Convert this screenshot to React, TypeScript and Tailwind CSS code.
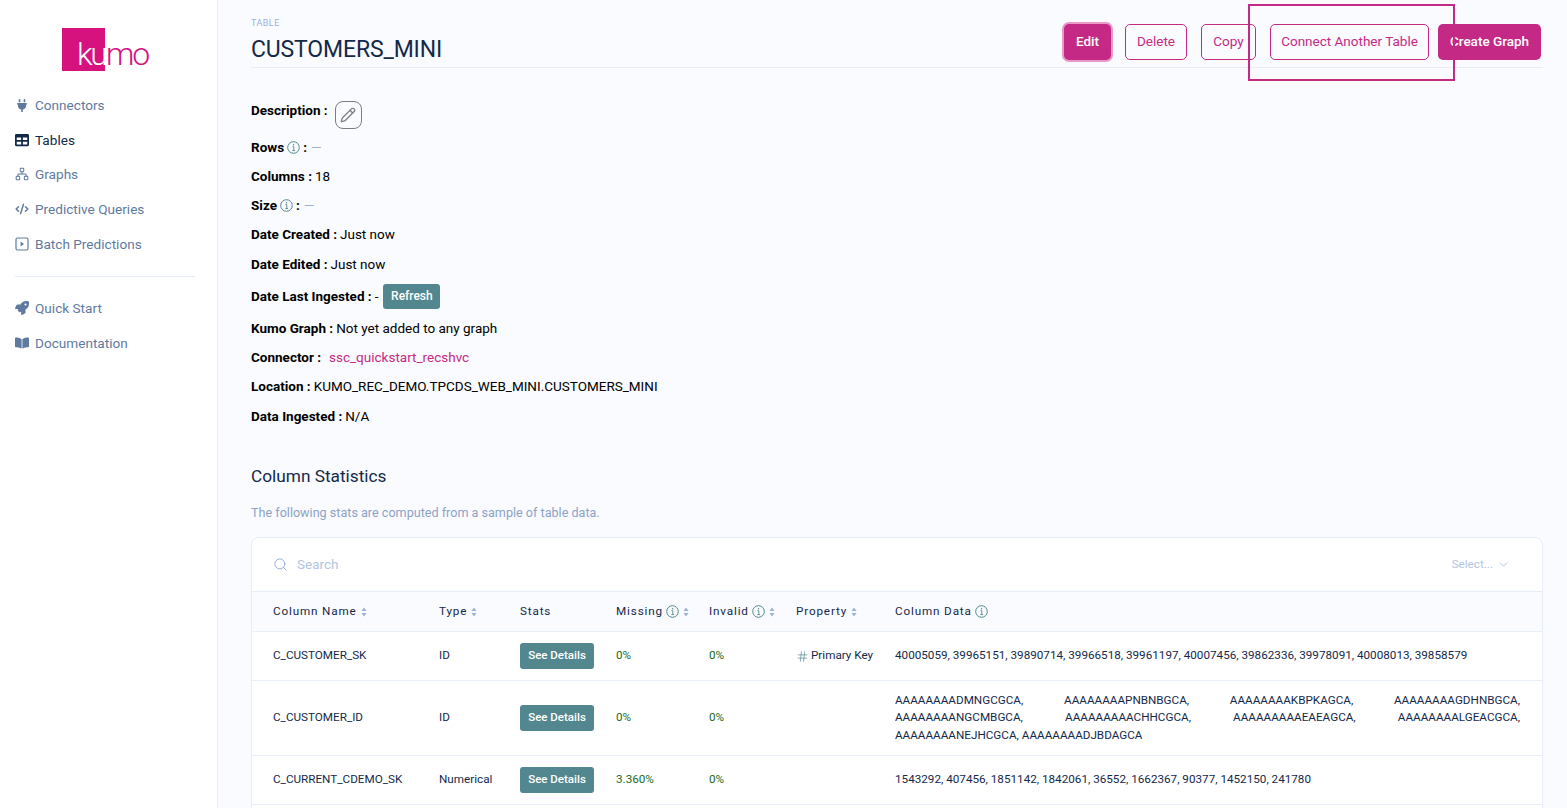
import React from "react";
import { Pencil, Search, ChevronDown, Hash, Network, CodeXml } from "lucide-react";
import { FaPlug, FaTable, FaRocket, FaBookOpen } from "react-icons/fa";

const nav = "flex items-center h-5 text-[13.6px] text-[#5f7a9f]";

function Sort() {
  return (
    <svg width="6" height="10" viewBox="0 0 6 10" className="ml-[4px] shrink-0">
      <path d="M3 0.5L5.6 4H0.4Z M3 9.5L0.4 6H5.6Z" fill="#9db3d6" />
    </svg>
  );
}

function I({ className }: { className: string }) {
  return (
    <svg viewBox="0 0 13 13" fill="none" className={className}>
      <circle cx="6.5" cy="6.5" r="5.8" stroke="#528790" strokeWidth="1" />
      <path d="M5.4 5.6H6.8V9.6M5.3 9.6H8.1" stroke="#528790" strokeWidth="0.9" />
      <circle cx="6.6" cy="3.7" r="0.7" fill="#528790" />
    </svg>
  );
}

function PlayBox({ className }: { className: string }) {
  return (
    <svg viewBox="0 0 14 14" fill="none" className={className}>
      <rect x="1" y="1" width="12" height="12" rx="1.5" stroke="currentColor" strokeWidth="1.2" />
      <path d="M5.6 4.6L9 7L5.6 9.4Z" fill="currentColor" />
    </svg>
  );
}

function Label({ children }: { children: React.ReactNode }) {
  return <span className="font-bold">{children}</span>;
}

const rowGrid = "grid grid-cols-[166px_81px_96px_93px_87px_99px_1fr] pl-[21px] pr-[22px] items-center border-b border-[#eaf0f8] text-[11.7px] text-[#14294a]";

function See() {
  return (
    <button className="block w-[74px] h-[26px] rounded-[3px] bg-[#528790] text-white text-[11.5px] font-medium text-center">See Details</button>
  );
}

export default function App() {
  return (
    <div className="h-screen w-full overflow-hidden flex bg-[#fafbfe] font-['Roboto',sans-serif] relative">
      <aside className="w-[218px] shrink-0 bg-white border-r border-[#e6edf7] h-full">
        <div className="mt-[28px] ml-[62px] flex items-start h-[43px]">
          <div className="w-[43px] h-[43px] bg-[#d6127f] relative shrink-0">
            <span className="absolute left-[15px] top-[6px] text-white text-[32px] leading-[40px] font-light tracking-[-2.5px]">ku</span>
          </div>
          <span className="text-[#d6127f] text-[32px] leading-[40px] font-light tracking-[-2.2px] ml-[1px] mt-[6px]">mo</span>
        </div>
        <nav className="mt-[24px] ml-[15px] w-[180px]">
          <div className={nav}><FaPlug className="w-[14px] h-[13px] mr-[6px] text-[#5f7a9f]" />Connectors</div>
          <div className="flex items-center h-5 text-[13.6px] text-[#14294a] mt-[15px]"><FaTable className="w-[14px] h-[14px] mr-[6px]" />Tables</div>
          <div className={`${nav} mt-[14px]`}><Network strokeWidth={1.75} className="w-[14px] h-[14px] mr-[6px]" />Graphs</div>
          <div className={`${nav} mt-[15px]`}><CodeXml strokeWidth={2.5} className="w-[14px] h-[14px] mr-[6px]" />Predictive Queries</div>
          <div className={`${nav} mt-[15px]`}><PlayBox className="w-[14px] h-[14px] mr-[6px]" />Batch Predictions</div>
          <div className="h-px bg-[#e6edf7] mt-[22px]" />
          <div className={`${nav} mt-[21px]`}><FaRocket className="w-[14px] h-[14px] mr-[6px]" />Quick Start</div>
          <div className={`${nav} mt-[15px]`}><FaBookOpen className="w-[14px] h-[14px] mr-[6px]" />Documentation</div>
        </nav>
      </aside>

      <main className="flex-1 min-w-0 pl-[33px] pr-[24px]">
        <header className="h-[68px] border-b border-[#e8ecf6] flex justify-between pr-[2px]">
          <div>
            <div className="mt-[17px] text-[9px] leading-[12px] tracking-[0.45px] text-[#9db3d6]">TABLE</div>
            <h1 className="mt-[5px] text-[23px] leading-[32px] font-normal text-[#14294a] tracking-[-0.15px]">CUSTOMERS_MINI</h1>
          </div>
          <div className="flex items-start pt-[24px] text-[13.5px]">
            <button className="h-[36px] w-[47px] pb-[1px] rounded-[5px] bg-[#c42a85] text-white font-medium ring-2 ring-[#e79ac8]">Edit</button>
            <button className="h-[36px] w-[62px] pb-[2px] ml-[14px] rounded-[5px] border border-[#c42a85] text-[#c42a85]">Delete</button>
            <button className="h-[36px] w-[55px] pb-[2px] ml-[14px] rounded-[5px] border border-[#c42a85] text-[#c42a85]">Copy</button>
            <button className="h-[36px] w-[159px] pb-[2px] ml-[14px] rounded-[5px] border border-[#c42a85] text-[#c42a85]">Connect Another Table</button>
            <button className="h-[36px] w-[103px] pb-[1px] ml-[9px] rounded-[5px] bg-[#c42a85] text-white font-medium">Create Graph</button>
          </div>
        </header>

        <section className="text-[13.5px] leading-[20px] text-[#000]">
          <div className="flex items-center h-5 mt-[32px]"><Label>Description :</Label>
            <button className="ml-[7px] mt-[10px] w-[27px] h-[28px] rounded-[8px] border border-[#7d7d7d] flex items-center justify-center"><Pencil strokeWidth={2} className="w-[16px] h-[16px] text-[#808080]" /></button>
          </div>
          <div className="flex items-center h-5 mt-[17px]"><Label>Rows</Label><I className="w-[13px] h-[13px] mx-[3px]" /><Label>:</Label><span className="ml-[4px] text-[#9db3d6]">—</span></div>
          <div className="flex items-center h-5 mt-[9px]"><Label>Columns :</Label><span className="ml-[3px]">18</span></div>
          <div className="flex items-center h-5 mt-[9px]"><Label>Size</Label><I className="w-[13px] h-[13px] mx-[3px]" /><Label>:</Label><span className="ml-[4px] text-[#9db3d6]">—</span></div>
          <div className="flex items-center h-5 mt-[9px]"><Label>Date Created :</Label><span className="ml-[3px]">Just now</span></div>
          <div className="flex items-center h-5 mt-[10px]"><Label>Date Edited :</Label><span className="ml-[3px]">Just now</span></div>
          <div className="flex items-center h-5 mt-[12px]"><Label>Date Last Ingested :</Label><span className="ml-[3px]">-</span>
            <button className="ml-[5px] w-[57px] h-[25px] rounded-[3px] bg-[#528790] text-white text-[12px] font-medium">Refresh</button>
          </div>
          <div className="flex items-center h-5 mt-[12px]"><Label>Kumo Graph :</Label><span className="ml-[3px]">Not yet added to any graph</span></div>
          <div className="flex items-center h-5 mt-[9px]"><Label>Connector :</Label><span className="ml-[8px] text-[#c42a85]">ssc_quickstart_recshvc</span></div>
          <div className="flex items-center h-5 mt-[9px]"><Label>Location :</Label><span className="ml-[3px]">KUMO_REC_DEMO.TPCDS_WEB_MINI.CUSTOMERS_MINI</span></div>
          <div className="flex items-center h-5 mt-[10px]"><Label>Data Ingested :</Label><span className="ml-[3px]">N/A</span></div>
        </section>

        <h2 className="mt-[38px] text-[17.25px] leading-[24px] font-normal text-[#14294a]">Column Statistics</h2>
        <p className="mt-[17px] text-[12.6px] leading-[16px] text-[#8ca3c7]">The following stats are computed from a sample of table data.</p>

        <div className="mt-[16px] bg-white border border-[#e6edf7] rounded-t-[8px] overflow-hidden">
          <div className="h-[54px] flex items-center pl-[21px] pr-[32px] border-b border-[#e6edf7]">
            <Search strokeWidth={1.25} className="w-[15px] h-[15px] text-[#7f9cc6]" />
            <span className="ml-[9px] text-[13.5px] text-[#b4c5e0]">Search</span>
            <span className="ml-auto text-[11.7px] text-[#b4c5e0]">Select...</span>
            <ChevronDown strokeWidth={1.5} className="ml-[4px] w-[13px] h-[13px] text-[#9db3d6]" />
          </div>
          <div className={`${rowGrid} h-[40px] pt-[1px] bg-[#fafbfe] tracking-[0.85px] text-[#2c3a4f]`}>
            <div className="flex items-center">Column Name<Sort /></div>
            <div className="flex items-center">Type<Sort /></div>
            <div>Stats</div>
            <div className="flex items-center">Missing<I className="ml-[3px] w-[13px] h-[13px]" /><Sort /></div>
            <div className="flex items-center">Invalid<I className="ml-[3px] w-[13px] h-[13px]" /><Sort /></div>
            <div className="flex items-center">Property<Sort /></div>
            <div className="flex items-center">Column Data<I className="ml-[3px] w-[13px] h-[13px]" /></div>
          </div>
          <div className={`${rowGrid} h-[49px]`}>
            <div>C_CUSTOMER_SK</div><div>ID</div><div><See /></div>
            <div className="text-[#176b1d]">0%</div><div className="text-[#176b1d]">0%</div>
            <div className="flex items-center"><Hash strokeWidth={1.25} className="w-[13px] h-[13px] mr-[2px] mt-[2px] text-[#528790]" />Primary Key</div>
            <div>40005059, 39965151, 39890714, 39966518, 39961197, 40007456, 39862336, 39978091, 40008013, 39858579</div>
          </div>
          <div className={`${rowGrid} h-[75px]`}>
            <div>C_CUSTOMER_ID</div><div>ID</div><div><See /></div>
            <div className="text-[#176b1d]">0%</div><div className="text-[#176b1d]">0%</div>
            <div />
            <div className="text-justify leading-[17.5px]">AAAAAAAADMNGCGCA, AAAAAAAAPNBNBGCA, AAAAAAAAKBPKAGCA, AAAAAAAAGDHNBGCA, AAAAAAAANGCMBGCA, AAAAAAAAACHHCGCA, AAAAAAAAAEAEAGCA, AAAAAAAALGEACGCA, AAAAAAAANEJHCGCA, AAAAAAAADJBDAGCA</div>
          </div>
          <div className={`${rowGrid} h-[49px]`}>
            <div>C_CURRENT_CDEMO_SK</div><div>Numerical</div><div><See /></div>
            <div className="text-[#176b1d]">3.360%</div><div className="text-[#176b1d]">0%</div>
            <div />
            <div>1543292, 407456, 1851142, 1842061, 36552, 1662367, 90377, 1452150, 241780</div>
          </div>
          <div className="h-[49px]" />
        </div>
      </main>

      <div className="absolute left-[1248px] top-[4px] w-[207px] h-[77px] border-2 border-[#c42a85] pointer-events-none" />
    </div>
  );
}
